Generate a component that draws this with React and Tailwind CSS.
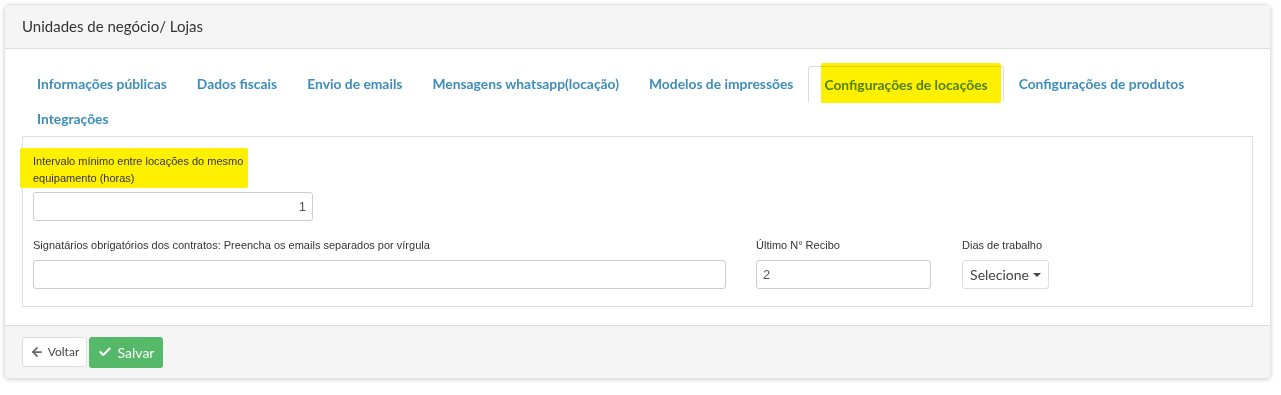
import { ArrowLeft, Check } from 'lucide-react'

const TABS = [
  'Informações públicas',
  'Dados fiscais',
  'Envio de emails',
  'Mensagens whatsapp(locação)',
  'Modelos de impressões',
  'Configurações de locações',
  'Configurações de produtos',
  'Integrações',
]

const ACTIVE = 'Configurações de locações'

const sans = { fontFamily: 'Lato, "Open Sans", sans-serif' }

export default function App() {
  return (
    <div className="bg-white w-[1281px] h-[395px] pt-[4px] pl-[4px]" style={sans}>
      <div className="w-[1267px] rounded-[6px] border border-[#e3e3e3] shadow-[0_1px_4px_rgba(0,0,0,0.18)] overflow-hidden">
        <div className="bg-[#f5f5f5] h-[44px] border-b border-[#dcdcdc] flex items-center pl-[17px] text-[15px] text-[#333]">
          Unidades de negócio/ Lojas
        </div>

        <div className="bg-white px-[17px] pt-[17px] pb-[18px]">
          <ul className="flex flex-wrap">
            {TABS.map(t => (
              <li key={t} className="relative">
                <span
                  className={`block px-[15px] h-[35px] leading-[35px] text-[13.85px] font-bold ${
                    t === ACTIVE
                      ? 'text-[#4f8a10] border border-b-0 border-[#ddd] rounded-t-[3px] bg-white h-[36px] -mb-px'
                      : 'text-[#3c8dbc]'
                  }`}
                >
                  {t}
                </span>
                {t === ACTIVE && (
                  <span className="absolute left-[13px] right-[3px] top-[-3px] h-[40px] bg-[#fff000] mix-blend-multiply rounded-[2px]" />
                )}
              </li>
            ))}
          </ul>

          <div className="border border-[#ddd] px-[10px] pt-[13px] pb-[17px] text-[11px] text-[#333]" style={{ fontFamily: '"Liberation Sans", Arial, sans-serif' }}>
            <div className="bg-[#fff000] -ml-[13px] pl-[13px] w-[228px] pt-[5px] pb-[1px] leading-[17px] -mt-[2px] rounded-[2px]">
              Intervalo mínimo entre locações do mesmo<br />equipamento (horas)
            </div>
            <div className="mt-[4px] w-[280px] h-[29px] border border-[#ccc] rounded-[3px] flex items-center justify-end pr-[6px] text-[13px] text-[#555]">
              1
            </div>

            <div className="flex mt-[16px]">
              <div className="w-[693px]">
                <div className="leading-[17px] mb-[6px]">Signatários obrigatórios dos contratos: Preencha os emails separados por vírgula</div>
                <div className="h-[29px] border border-[#ccc] rounded-[3px]" />
              </div>
              <div className="w-[175px] ml-[30px]">
                <div className="leading-[17px] mb-[6px]">Último N° Recibo</div>
                <div className="h-[29px] border border-[#ccc] rounded-[3px] flex items-center pl-[6px] text-[13px] text-[#555]">2</div>
              </div>
              <div className="ml-[31px]">
                <div className="leading-[17px] mb-[6px]">Dias de trabalho</div>
                <div className="h-[29px] w-[87px] border border-[#ddd] rounded-[3px] flex items-center justify-center gap-[4px] text-[14px] text-[#444]" style={sans}>
                  Selecione
                  <span className="w-0 h-0 border-l-[4px] border-r-[4px] border-t-[4px] border-l-transparent border-r-transparent border-t-[#444]" />
                </div>
              </div>
            </div>
          </div>
        </div>

        <div className="bg-[#f5f5f5] border-t border-[#dcdcdc] h-[53px] flex items-center pl-[17px] gap-[2px]">
          <button className="h-[30px] w-[65px] bg-white border border-[#ddd] rounded-[3px] flex items-center justify-center gap-[4px] text-[12px] text-[#444]">
            <ArrowLeft size={14} strokeWidth={3} className="text-[#666]" />
            Voltar
          </button>
          <button className="h-[31px] w-[74px] bg-[#56b869] rounded-[3px] flex items-center justify-center gap-[6px] text-[14px] text-white">
            <Check size={14} strokeWidth={3.5} />
            Salvar
          </button>
        </div>
      </div>
    </div>
  )
}
